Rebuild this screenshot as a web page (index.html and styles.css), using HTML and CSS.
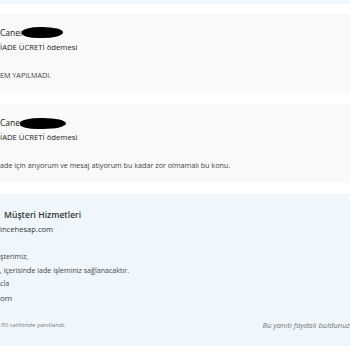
FILE: index.html
```html
<!DOCTYPE html>
<html lang="tr">
<head>
<meta charset="utf-8">
<link rel="stylesheet" href="styles.css">
</head>
<body>
<div class="top-strip"></div>
<div class="list">
  <div class="card">
    <div class="name">Caner<span class="redact redact-a"></span></div>
    <div class="subject">İADE ÜCRETİ ödemesi</div>
    <div class="message">EM YAPILMADI.</div>
  </div>
  <div class="card">
    <div class="name">Cane<span class="redact redact-b"></span></div>
    <div class="subject">İADE ÜCRETİ ödemesi</div>
    <div class="message">ade için arıyorum ve mesaj atıyorum bu kadar zor olmamalı bu konu.</div>
  </div>
  <div class="card reply">
    <div class="reply-title">Müşteri Hizmetleri</div>
    <div class="reply-site">incehesap.com</div>
    <div class="reply-body">
      <div>şterimiz,</div>
      <div>, içerisinde iade işleminiz sağlanacaktır.</div>
      <div>cla</div>
      <div class="big">om</div>
    </div>
    <div class="reply-footer">
      <span class="date">:50 tarihinde yanıtlandı.</span>
      <span class="helpful">Bu yanıtı faydalı buldunuz</span>
    </div>
  </div>
</div>
</body>
</html>
```
FILE: styles.css
```css
html, body {
  margin: 0;
  padding: 0;
  background: #ffffff;
  overflow: hidden;
}
body {
  font-family: "Open Sans", "Noto Sans", sans-serif;
  color: #333333;
  width: 350px;
  height: 350px;
}
.top-strip {
  height: 4px;
  background: #f0f7fd;
}
.list {
  display: flex;
  flex-direction: column;
  gap: 11px;
  padding-top: 10px;
}
.card {
  background: #f9f9f9;
  padding: 12px 0 11px 0;
  height: 56px;
}
.name {
  font-size: 8.5px;
  line-height: 14px;
  height: 14px;
  color: #222;
  white-space: nowrap;
}
.redact {
  display: inline-block;
  background: #000;
  vertical-align: middle;
  border-radius: 45% 50% 50% 40%;
}
.redact-a {
  width: 41px;
  height: 11px;
  margin-left: -2px;
  margin-top: -2px;
}
.redact-b {
  width: 46px;
  height: 11px;
  margin-left: 0;
  margin-top: -1px;
}
.subject {
  font-size: 7.7px;
  line-height: 14px;
  color: #222;
}
.message {
  margin-top: 14px;
  font-size: 7.2px;
  line-height: 14px;
  color: #444;
  white-space: nowrap;
}
.reply {
  background: #eff7fd;
  height: auto;
  padding: 14px 0 15px 0;
}
.reply-title {
  font-size: 8.6px;
  line-height: 14px;
  font-weight: 600;
  color: #333;
  padding-left: 4px;
}
.reply-site {
  font-size: 7.6px;
  line-height: 14px;
  color: #333;
}
.reply-body {
  margin-top: 14px;
  font-size: 7.1px;
  line-height: 13.5px;
  color: #444;
  white-space: nowrap;
}
.reply-body .big {
  font-size: 8px;
}
.reply-footer {
  margin-top: 15px;
  display: flex;
  justify-content: space-between;
  align-items: center;
  height: 12px;
  white-space: nowrap;
}
.date {
  font-size: 6px;
  color: #777;
}
.helpful {
  font-size: 7.6px;
  font-style: italic;
  color: #777;
}
```
